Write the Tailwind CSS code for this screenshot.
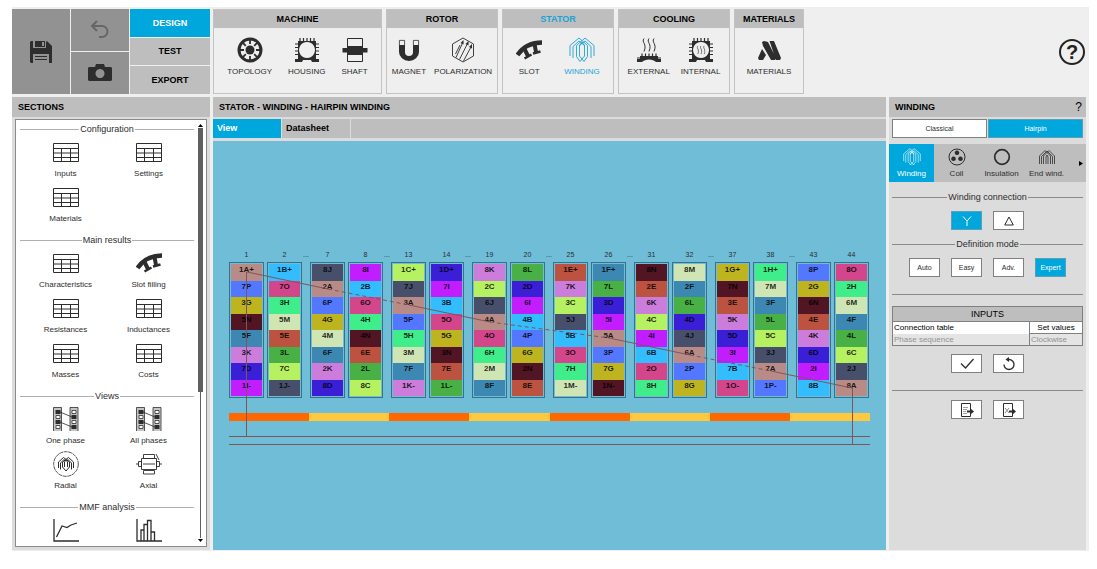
<!DOCTYPE html>
<html lang="en">
<head>
  <meta charset="UTF-8" />
  <meta name="viewport" content="width=device-width, initial-scale=1.0"/>
  <title>Stator | Hairpin winding</title>
  <script src="https://cdn.jsdelivr.net/npm/@tailwindcss/browser@4"></script>
</head>
<body class="bg-white font-['Liberation_Sans',Arial,sans-serif] text-[8px] leading-3 text-[#2d2d2d]">

  <!-- Icon set -->
  <svg class="hidden">
    <symbol id="save" viewBox="0 0 22 22">
      <path fill="currentColor" d="M1 0h2v7h13V0h1l5 5v17h-3v-9H3v9H1l-1-1V1zM5 0h10v6H5zM5 15h12v1H5zM5 18h12v1H5z"/>
      <path fill="#929292" d="M12 1h2v4h-2zM17 0h-1v1z"/>
    </symbol>
    <symbol id="undo" viewBox="0 0 20 20">
      <path fill="none" stroke="currentColor" stroke-width="2" d="M7 1L2 6l5 5M2 6h10a5.500 5.500 0 0 1 0 11H9"/>
    </symbol>
    <symbol id="camera" viewBox="0 0 24 18">
      <path fill="currentColor" fill-rule="evenodd" d="M1 3h6l1-3h8l1 3h6l1 1v12l-1 1H1l-1-1V4zM12 5a4.500 4.500 0 1 0 .01 0z"/>
    </symbol>
    <symbol id="topology" viewBox="0 0 26 26">
      <circle cx="13" cy="13" r="11" fill="none" stroke="currentColor" stroke-width="3"/>
      <circle cx="13" cy="13" r="4.500" fill="currentColor"/>
      <path stroke="currentColor" stroke-width="1.800" d="M13 2v5M13 19v5M2 13h5M19 13h5M5.200 5.200l3.600 3.600M17.200 17.200l3.600 3.600M5.200 20.800l3.600-3.600M17.200 8.800l3.600-3.600"/>
    </symbol>
    <symbol id="frame" viewBox="0 0 26 26">
      <path fill="currentColor" fill-rule="evenodd" d="M4 4h18v18h3v3h-7l-1-2H9l-1 2H1v-3h3zM13 5a8 8 0 1 0 .01 0z"/>
      <path stroke="currentColor" stroke-width="1.200" d="M6 1v4M9.500 1v4M13 1v4M16.500 1v4M20 1v4M1 7h4M1 10.500h4M1 14h4M1 17.500h4M21 7h4M21 10.500h4M21 14h4M21 17.500h4"/>
    </symbol>
    <symbol id="shaft" viewBox="0 0 26 26">
      <path fill="none" stroke="currentColor" d="M5.500 1.500h15v23h-15z"/>
      <path fill="currentColor" d="M5 9h16v2h4.500v4.500H21V18H5v-2.500H.5V11H5z"/>
    </symbol>
    <symbol id="magnet" viewBox="0 0 26 26">
      <path fill="currentColor" d="M3 8h6v7a4 4 0 0 0 8 0V8h6v7a10 9 0 0 1-20 0z"/>
      <path fill="none" stroke="currentColor" stroke-width=".8" d="M3.400 8V3.400h5.200V8M17.400 8V3.400h5.200V8"/>
    </symbol>
    <symbol id="polarization" viewBox="0 0 26 26">
      <path fill="none" stroke="currentColor" stroke-width=".9" d="M13 1l10.500 6v12L13 25 2.500 19V7zM6 20.500L13 5M9.500 22.500L18 5.500M13.500 24L21.500 9M5.500 17L10 8"/>
      <path fill="currentColor" d="M13.500 3v4.500l-3-1.500zM18.500 4v4.500l-3-1.500zM22 7v4.500l-3-1.500z"/>
    </symbol>
    <symbol id="slot" viewBox="0 0 26 26">
      <path fill="none" stroke="currentColor" stroke-width="4.500" d="M1.500 18C7 10 14 5.500 26 5.500"/>
      <path fill="none" stroke="currentColor" stroke-width="4" d="M8.500 12l3.500 7M18.500 7l1.500 8"/>
      <path fill="none" stroke="currentColor" stroke-width="2.500" d="M8.500 21.500l7-4M17 16.500l7.500-2"/>
    </symbol>
    <symbol id="coils" viewBox="0 0 26 26">
      <path fill="none" stroke="currentColor" stroke-width=".9" d="M1 19V8.500L10 1l8.500 7.500v11L15 24.500 10.500 19V8.500L13 5l2.500 3.500V19L11 24.500l-3.500-5v-11L16 1l9 7.500V19M4 21V9.500L10 4l6 5M22 21V9.500L16 4l-6 5"/>
    </symbol>
    <symbol id="heat" viewBox="0 0 14 14">
      <path fill="none" stroke="currentColor" d="M2 .5c-3 4 3.500 5 0 13M7 .5c-3 4 3.500 5 0 13M12 .5c-3 4 3.500 5 0 13"/>
    </symbol>
    <symbol id="external" viewBox="0 0 26 26">
      <use href="#heat" x="6" y="1" width="14" height="14"/>
      <path fill="currentColor" d="M4 19h18v3h3v3h-5c-3-3.500-11-3.500-14 0H1v-3h3z"/>
      <path stroke="currentColor" stroke-width="1.200" d="M6 16.500v3M9.500 16.500v3M13 16.500v3M16.500 16.500v3M20 16.500v3M1 21h4M21 21h4"/>
    </symbol>
    <symbol id="internal" viewBox="0 0 26 26">
      <use href="#frame" width="26" height="26"/>
      <use href="#heat" x="8.500" y="8.500" width="9" height="9"/>
    </symbol>
    <symbol id="materials" viewBox="0 0 26 26">
      <path fill="currentColor" d="M6 5l2-1 4 1 8 16-1 2h-4L7 9zM13.500 4H18l7 17-1 2h-4zM6 12l4 6-3 5H3l-1-2z"/>
    </symbol>
    <symbol id="table" viewBox="0 0 26 19">
      <path fill="none" stroke="currentColor" d="M.5.5h25v18H.5zM.5 5.500h25M.5 10h25M.5 14.500h25M8.500 6v12M17.500 6v12"/>
    </symbol>
    <symbol id="phases" viewBox="0 0 26 24">
      <path fill="#c4c4c4" stroke="currentColor" stroke-width=".8" d="M.5 24V.5h8V24M17 24V.5h8V24"/>
      <path fill="currentColor" d="M2.500 3h5v4h-5zM2.500 13h5v4h-5zM18.500 8h5v4h-5zM18.500 18h5v4h-5z"/>
      <path fill="#fff" stroke="currentColor" stroke-width=".8" d="M3 8.500h4v3H3zM3 18.500h4v3H3zM19 3.500h4v3h-4zM19 13.500h4v3h-4z"/>
      <path stroke="currentColor" stroke-width=".8" d="M7 5l12 5M7 15l12 5"/>
    </symbol>
    <symbol id="radial" viewBox="0 0 26 26">
      <circle cx="13" cy="13" r="12.300" fill="none" stroke="currentColor" stroke-width=".8" stroke-dasharray="4 .6"/>
      <path fill="none" stroke="currentColor" d="M5.500 17v-6l5-4.500L16.500 11v5l-3.500 4-3.500-4v-5L15.500 6.500l5 4.500v6M7.500 18.500V12l4-4M18.500 18.500V12l-4-4M11.500 16v-5L13 9l1.500 2v5"/>
    </symbol>
    <symbol id="axial" viewBox="0 0 26 22">
      <path fill="none" stroke="currentColor" stroke-width=".9" d="M5.500 5.500h15v11h-15zM7.500 1.500h11v4h-11zM7.500 17.500h11v3.500h-11zM2.500 8.500h3v5h-3zM20.500 8.500h3v5h-3zM0 11h2M7 11h12M24 11h2M20 1l3 6"/>
    </symbol>
    <symbol id="curve" viewBox="0 0 26 24">
      <path fill="none" stroke="currentColor" stroke-width="1.300" d="M1 1v22h25M3.500 19L9 8l5 1.500L18 7l6-2"/>
    </symbol>
    <symbol id="bars" viewBox="0 0 26 24">
      <path fill="none" stroke="currentColor" stroke-width="1.300" d="M1 1v22h25M5 23V12h3v11M8 12V6.500h3.500V23M11.500 6.500v-4H15V23M15 14h3.500v9"/>
    </symbol>
    <symbol id="coil" viewBox="0 0 18 18">
      <circle cx="9" cy="9" r="8" fill="none" stroke="currentColor"/>
      <path fill="currentColor" d="M9 2.500a2.300 2.300 0 1 0 .01 0zM5.500 8.500a2.300 2.300 0 1 0 .01 0zM12.500 8.500a2.300 2.300 0 1 0 .01 0z"/>
    </symbol>
    <symbol id="ring" viewBox="0 0 18 18">
      <circle cx="9" cy="9" r="7.300" fill="none" stroke="currentColor" stroke-width="1.700"/>
    </symbol>
    <symbol id="endwind" viewBox="0 0 18 18">
      <path fill="none" stroke="currentColor" stroke-width=".8" d="M1.500 16V8L7 2.500 12.500 8v8M3.500 16V8.500L9 3l5.500 5.500V16M5.500 16V8L11 2.500 16.500 8v8M8 16V9l1-2 1 2v7"/>
    </symbol>
    <symbol id="sheet" viewBox="0 0 14 14">
      <path fill="none" stroke="currentColor" d="M1.500.5h9v13h-9z"/>
      <path fill="currentColor" d="M7 7.500h3V5l4 3.500-4 3.500V9.500H7z"/>
    </symbol>
  </svg>

  <div class="ml-3 mr-2 mt-[7px] bg-[#efefef] pt-0.5 pr-[3px] pb-px">

    <!-- Top bar -->
    <header class="flex h-[85px] gap-[3px]">
      <div class="grid w-[198px] shrink-0 grid-cols-[58px_58px_1fr] gap-x-px">
        <button aria-label="Save" class="flex items-center justify-center bg-[#929292]"><svg class="size-[22px]"><use href="#save"/></svg></button>
        <div class="grid grid-rows-2 gap-px">
          <button aria-label="Undo" class="flex items-center justify-center bg-[#929292] text-[#666]"><svg class="size-5"><use href="#undo"/></svg></button>
          <button aria-label="Screenshot" class="flex items-center justify-center bg-[#929292]"><svg class="h-[18px] w-6"><use href="#camera"/></svg></button>
        </div>
        <div class="grid grid-rows-3 gap-px text-[9px] font-bold">
          <button class="bg-[#00a7dd] text-white">DESIGN</button>
          <button class="bg-[#bebebe] text-black">TEST</button>
          <button class="bg-[#bebebe] text-black">EXPORT</button>
        </div>
      </div>

      <nav class="flex gap-1">
        <section class="w-[169px] border border-[#c3c3c3]">
          <h2 class="bg-[#bebebe] text-center text-[9px] leading-[18px] font-bold text-black">MACHINE</h2>
          <div class="flex justify-center gap-4 pt-[9px]">
            <button class="flex flex-col items-center gap-[3px]"><svg class="size-[26px]"><use href="#topology"/></svg>TOPOLOGY</button>
            <button class="flex flex-col items-center gap-[3px]"><svg class="size-[26px]"><use href="#frame"/></svg>HOUSING</button>
            <button class="flex flex-col items-center gap-[3px]"><svg class="size-[26px]"><use href="#shaft"/></svg>SHAFT</button>
          </div>
        </section>
        <section class="w-[112px] border border-[#c3c3c3]">
          <h2 class="bg-[#bebebe] text-center text-[9px] leading-[18px] font-bold text-black">ROTOR</h2>
          <div class="flex justify-center gap-2 pt-[9px]">
            <button class="flex flex-col items-center gap-[3px]"><svg class="size-[26px]"><use href="#magnet"/></svg>MAGNET</button>
            <button class="flex flex-col items-center gap-[3px]"><svg class="size-[26px]"><use href="#polarization"/></svg>POLARIZATION</button>
          </div>
        </section>
        <section class="w-[112px] border border-[#c3c3c3]">
          <h2 class="bg-[#bebebe] text-center text-[9px] leading-[18px] font-bold text-[#1ba3d6]">STATOR</h2>
          <div class="flex justify-center gap-[22px] pt-[9px]">
            <button class="flex flex-col items-center gap-[3px]"><svg class="size-[26px]"><use href="#slot"/></svg>SLOT</button>
            <button class="flex flex-col items-center gap-[3px] text-[#1ba3d6]"><svg class="size-[26px]"><use href="#coils"/></svg>WINDING</button>
          </div>
        </section>
        <section class="w-[112px] border border-[#c3c3c3]">
          <h2 class="bg-[#bebebe] text-center text-[9px] leading-[18px] font-bold text-black">COOLING</h2>
          <div class="flex justify-center gap-[11px] pt-[9px]">
            <button class="flex flex-col items-center gap-[3px]"><svg class="size-[26px]"><use href="#external"/></svg>EXTERNAL</button>
            <button class="flex flex-col items-center gap-[3px]"><svg class="size-[26px]"><use href="#internal"/></svg>INTERNAL</button>
          </div>
        </section>
        <section class="w-[70px] border border-[#c3c3c3]">
          <h2 class="bg-[#bebebe] text-center text-[9px] leading-[18px] font-bold text-black">MATERIALS</h2>
          <div class="flex justify-center pt-[9px]">
            <button class="flex flex-col items-center gap-[3px]"><svg class="size-[26px]"><use href="#materials"/></svg>MATERIALS</button>
          </div>
        </section>
      </nav>

      <button aria-label="Help" class="mr-px ml-auto size-[26px] self-center rounded-full border-2 border-[#222] text-[20px] leading-[22px] font-bold text-[#222]">?</button>
    </header>

    <div class="mt-[3px] grid grid-cols-[198px_1fr_197px] gap-[3px]">

      <!-- Sections -->
      <aside class="bg-[#dcdcdc] pb-[3px]">
        <h2 class="bg-[#bebebe] pl-1.5 text-[9px] leading-5 font-bold text-black">SECTIONS</h2>
        <div class="mx-[3px] mt-0.5 flex h-[428px] overflow-hidden border border-[#8a8a8a] bg-white pt-0.5 pl-1">
          <div class="flex-1 space-y-[7px]">
            <section>
              <h3 class="flex items-center gap-px text-[9px] leading-[14px] before:h-px before:flex-1 before:bg-[#b0b0b0] after:h-px after:flex-1 after:bg-[#b0b0b0]">Configuration</h3>
              <div class="grid auto-rows-[45px] grid-cols-2 px-1">
                <button class="flex flex-col items-center"><span class="flex h-8 items-center"><svg class="h-[19px] w-[26px]"><use href="#table"/></svg></span>Inputs</button>
                <button class="flex flex-col items-center"><span class="flex h-8 items-center"><svg class="h-[19px] w-[26px]"><use href="#table"/></svg></span>Settings</button>
                <button class="flex flex-col items-center"><span class="flex h-8 items-center"><svg class="h-[19px] w-[26px]"><use href="#table"/></svg></span>Materials</button>
              </div>
            </section>
            <section>
              <h3 class="flex items-center gap-px text-[9px] leading-[14px] before:h-px before:flex-1 before:bg-[#b0b0b0] after:h-px after:flex-1 after:bg-[#b0b0b0]">Main results</h3>
              <div class="grid auto-rows-[45px] grid-cols-2 px-1">
                <button class="flex flex-col items-center"><span class="flex h-8 items-center"><svg class="h-[19px] w-[26px]"><use href="#table"/></svg></span>Characteristics</button>
                <button class="flex flex-col items-center"><span class="flex h-8 items-center"><svg class="size-[26px]"><use href="#slot"/></svg></span>Slot filling</button>
                <button class="flex flex-col items-center"><span class="flex h-8 items-center"><svg class="h-[19px] w-[26px]"><use href="#table"/></svg></span>Resistances</button>
                <button class="flex flex-col items-center"><span class="flex h-8 items-center"><svg class="h-[19px] w-[26px]"><use href="#table"/></svg></span>Inductances</button>
                <button class="flex flex-col items-center"><span class="flex h-8 items-center"><svg class="h-[19px] w-[26px]"><use href="#table"/></svg></span>Masses</button>
                <button class="flex flex-col items-center"><span class="flex h-8 items-center"><svg class="h-[19px] w-[26px]"><use href="#table"/></svg></span>Costs</button>
              </div>
            </section>
            <section>
              <h3 class="flex items-center gap-px text-[9px] leading-[14px] before:h-px before:flex-1 before:bg-[#b0b0b0] after:h-px after:flex-1 after:bg-[#b0b0b0]">Views</h3>
              <div class="grid auto-rows-[45px] grid-cols-2 px-1">
                <button class="flex flex-col items-center"><span class="flex h-8 items-center"><svg class="h-6 w-[26px]"><use href="#phases"/></svg></span>One phase</button>
                <button class="flex flex-col items-center"><span class="flex h-8 items-center"><svg class="h-6 w-[26px]"><use href="#phases"/></svg></span>All phases</button>
                <button class="flex flex-col items-center"><span class="flex h-8 items-center"><svg class="size-[26px]"><use href="#radial"/></svg></span>Radial</button>
                <button class="flex flex-col items-center"><span class="flex h-8 items-center"><svg class="h-[22px] w-[26px]"><use href="#axial"/></svg></span>Axial</button>
              </div>
            </section>
            <section>
              <h3 class="flex items-center gap-px text-[9px] leading-[14px] before:h-px before:flex-1 before:bg-[#b0b0b0] after:h-px after:flex-1 after:bg-[#b0b0b0]">MMF analysis</h3>
              <div class="grid grid-cols-2 px-1">
                <button aria-label="Curve" class="flex h-8 items-center justify-center"><svg class="h-6 w-[26px]"><use href="#curve"/></svg></button>
                <button aria-label="Harmonics" class="flex h-8 items-center justify-center"><svg class="h-6 w-[26px]"><use href="#bars"/></svg></button>
              </div>
            </section>
          </div>
          <!-- Scrollbar -->
          <div class="mr-[3px] ml-1 flex w-[5px] flex-col items-center pt-px pb-[3px]">
            <svg class="h-[5px] w-[5px] shrink-0" viewBox="0 0 5 5"><path d="M0 4l2.500-3L5 4z"/></svg>
            <span class="h-[264px] w-[5px] bg-[#606060]"></span>
            <span class="w-px flex-1 bg-[#606060]"></span>
            <svg class="h-[5px] w-[5px] shrink-0" viewBox="0 0 5 5"><path d="M0 1l2.500 3L5 1z"/></svg>
          </div>
        </div>
      </aside>

      <!-- Winding view -->
      <main class="flex flex-col bg-[#dcdcdc]">
        <h1 class="bg-[#bebebe] pl-1.5 text-[9px] leading-5 font-bold text-black">STATOR - WINDING - HAIRPIN WINDING</h1>
        <div class="mt-0.5 mb-[3px] flex gap-px text-[9px] leading-[19px] font-bold">
          <button class="w-[68px] bg-[#00a7dd] pl-1 text-left text-white">View</button>
          <button class="w-[68px] bg-[#bebebe] pl-1 text-left text-black">Datasheet</button>
          <span class="flex-1 bg-[#bebebe]"></span>
        </div>
        <div class="flex-1 bg-[#6fbdd7] pt-[108px]">
          <div class="relative mx-auto h-[196px] w-[641px]">
            <div id="slots" class="flex"></div>
            <div class="mt-[15px] grid h-2 grid-cols-8">
              <span class="bg-[#ff6700]"></span><span class="bg-[#ffc83f]"></span>
              <span class="bg-[#ff6700]"></span><span class="bg-[#ffc83f]"></span>
              <span class="bg-[#ff6700]"></span><span class="bg-[#ffc83f]"></span>
              <span class="bg-[#ff6700]"></span><span class="bg-[#ffc83f]"></span>
            </div>
            <!-- Path of phase A -->
            <svg class="absolute inset-0" width="641" height="196" fill="none" stroke="#7d565c">
              <path d="M0 187.500h641M0 195.500h641M17.500 23v164M623.500 139v56"/>
              <path d="M18 23l81 17M180 56l81 17M380 89l81 17M542 122l81 17"/>
              <path stroke-dasharray="4 3" d="M99 40l81 16M261 73l119 16M461 106l81 16"/>
            </svg>
          </div>
        </div>
      </main>

      <!-- Winding settings -->
      <aside class="bg-[#dcdcdc]">
        <div class="flex justify-between bg-[#bebebe] pr-1 pl-1.5 leading-5 text-black">
          <h2 class="text-[9px] font-bold">WINDING</h2>
          <button aria-label="Winding help" class="text-[12px]">?</button>
        </div>
        <div class="mx-[3px] mt-0.5 grid grid-cols-2 gap-px text-[7px]">
          <button class="h-[19px] border border-[#808080] bg-white">Classical</button>
          <button class="h-[19px] border border-[#5c9fb8] bg-[#00a7dd] text-white">Hairpin</button>
        </div>

        <div class="mt-1.5 flex h-[38px] bg-[#bebebe]">
          <button class="flex w-[45px] flex-col items-center bg-[#00a7dd] pt-1 text-white"><svg class="size-[18px]"><use href="#coils"/></svg><span class="mt-0.5">Winding</span></button>
          <button class="flex w-[45px] flex-col items-center pt-1"><svg class="size-[18px]"><use href="#coil"/></svg><span class="mt-0.5">Coil</span></button>
          <button class="flex w-[45px] flex-col items-center pt-1"><svg class="size-[18px]"><use href="#ring"/></svg><span class="mt-0.5">Insulation</span></button>
          <button class="flex w-[45px] flex-col items-center pt-1"><svg class="size-[18px]"><use href="#endwind"/></svg><span class="mt-0.5">End wind.</span></button>
          <button aria-label="More tabs" class="mr-[3px] ml-auto"><svg class="size-[5px]" viewBox="0 0 5 5"><path d="M1 0l4 2.500L1 5z"/></svg></button>
        </div>

        <div class="mx-[3px]">
          <h3 class="mt-2 flex items-center gap-px text-[9px] leading-[14px] before:h-px before:flex-1 before:bg-[#8a8a8a] after:h-px after:flex-1 after:bg-[#8a8a8a]">Winding connection</h3>
          <div class="mt-[7px] flex justify-center gap-[11px]">
            <button aria-label="Star" class="flex h-[19px] w-[31px] items-center justify-center border border-[#5c9fb8] bg-[#00a7dd] text-white"><svg class="size-[10px]" viewBox="0 0 10 10"><path fill="none" stroke="currentColor" d="M1 .5l4 4.500 4-4.500M5 5v5"/></svg></button>
            <button aria-label="Delta" class="flex h-[19px] w-[31px] items-center justify-center border border-[#808080] bg-white"><svg class="size-[10px]" viewBox="0 0 10 10"><path fill="none" stroke="currentColor" d="M5 1l4.300 8H.7z"/></svg></button>
          </div>

          <h3 class="mt-[7px] flex items-center gap-px text-[9px] leading-[14px] before:h-px before:flex-1 before:bg-[#8a8a8a] after:h-px after:flex-1 after:bg-[#8a8a8a]">Definition mode</h3>
          <div class="mt-[7px] flex justify-center gap-[11px] text-[7px]">
            <button class="h-[19px] w-[31px] border border-[#808080] bg-white">Auto</button>
            <button class="h-[19px] w-[31px] border border-[#808080] bg-white">Easy</button>
            <button class="h-[19px] w-[31px] border border-[#808080] bg-white">Adv.</button>
            <button class="h-[19px] w-[31px] border border-[#5c9fb8] bg-[#00a7dd] text-white">Expert</button>
          </div>

          <hr class="mt-[17px] border-[#8a8a8a]">
          <table class="mt-[11px] w-full border-collapse border border-[#808080]">
            <thead>
              <tr><th colspan="2" class="h-[15px] border border-[#808080] bg-[#bebebe] p-0 text-[9px] font-normal text-black">INPUTS</th></tr>
            </thead>
            <tbody>
              <tr class="h-3 bg-white leading-[11px] text-black">
                <td class="p-0 pl-px">Connection table</td>
                <td class="w-[53px] border border-[#808080] p-0"><button class="block w-full">Set values</button></td>
              </tr>
              <tr class="h-3 bg-[#e4e4e4] leading-[11px] text-[#929292]">
                <td class="p-0 pl-px">Phase sequence</td>
                <td class="border border-[#808080] p-0 pl-px">Clockwise</td>
              </tr>
            </tbody>
          </table>

          <div class="mt-2 flex justify-center gap-[11px]">
            <button aria-label="Apply" class="flex h-[19px] w-[31px] items-center justify-center border border-[#808080] bg-white"><svg class="h-3 w-[14px]" viewBox="0 0 14 12"><path fill="none" stroke="currentColor" stroke-width="1.300" d="M1 5.500L5.500 10 13.500 1"/></svg></button>
            <button aria-label="Reset" class="flex h-[19px] w-[31px] items-center justify-center border border-[#808080] bg-white"><svg class="size-[14px]" viewBox="0 0 14 14"><path fill="none" stroke="currentColor" stroke-width="1.300" d="M2 7.500a5 5 0 1 0 5-5H5"/><path fill="currentColor" d="M3.500 2.500L7 0v5z"/></svg></button>
          </div>
          <hr class="mt-[17px] border-[#8a8a8a]">
          <div class="mt-[9px] flex justify-center gap-[11px]">
            <button aria-label="Export text" class="flex h-[19px] w-[31px] items-center justify-center border border-[#808080] bg-white"><svg class="size-[14px]" viewBox="0 0 14 14"><use href="#sheet"/><path stroke="#888" stroke-width=".8" d="M3 4.500h5M3 6.500h4M3 8.500h3M3 10.500h4"/></svg></button>
            <button aria-label="Export spreadsheet" class="flex h-[19px] w-[31px] items-center justify-center border border-[#808080] bg-white"><svg class="size-[14px]" viewBox="0 0 14 14"><use href="#sheet"/><path stroke="#888" d="M3 5l4 5M7 5l-4 5"/></svg></button>
          </div>
        </div>
      </aside>
    </div>
  </div>

  <script>
    // one colour per phase letter
    const phaseColors = {
      A: 'bg-[#b98b86]', B: 'bg-[#33bdff]', C: 'bg-[#b6f161]', D: 'bg-[#3a1fd6]',
      E: 'bg-[#bc5340]', F: 'bg-[#3d87b3]', G: 'bg-[#bdb41f]', H: 'bg-[#3fee8b]',
      I: 'bg-[#c11dff]', J: 'bg-[#474f6b]', K: 'bg-[#cc7ddb]', L: 'bg-[#49b046]',
      M: 'bg-[#cfe6b4]', N: 'bg-[#511524]', O: 'bg-[#d3468b]', P: 'bg-[#5377ff]'
    };
    const slots = [
      [1, '1A+ 7P 3G 5N 5F 3K 7D 1I-'], [2, '1B+ 7O 3H 5M 5E 3L 7C 1J-'],
      [7, '8J 2A 6P 4G 4M 6F 2K 8D'], [8, '8I 2B 6O 4H 4N 6E 2L 8C'],
      [13, '1C+ 7J 3A 5P 5H 3M 7F 1K-'], [14, '1D+ 7I 3B 5O 5G 3N 7E 1L-'],
      [19, '8K 2C 6J 4A 4O 6H 2M 8F'], [20, '8L 2D 6I 4B 4P 6G 2N 8E'],
      [25, '1E+ 7K 3C 5J 5B 3O 7H 1M-'], [26, '1F+ 7L 3D 5I 5A 3P 7G 1N-'],
      [31, '8N 2E 6K 4C 4I 6B 2O 8H'], [32, '8M 2F 6L 4D 4J 6A 2P 8G'],
      [37, '1G+ 7N 3E 5K 5D 3I 7B 1O-'], [38, '1H+ 7M 3F 5L 5C 3J 7A 1P-'],
      [43, '8P 2G 6N 4E 4K 6D 2I 8B'], [44, '8O 2H 6M 4F 4L 6C 2J 8A']
    ];

    document.getElementById('slots').innerHTML = slots.map(([number, wires], i) => {
      const cells = wires.split(' ').map(wire =>
        `<span class="${phaseColors[wire[1]]}">${wire}</span>`).join('');
      const gap = i === slots.length - 1 ? ''
        : i % 2 ? '<span class="w-2 text-center text-[7px]">...</span>'
        : '<span class="w-[3px]"></span>';
      return `<div class="w-[35px] text-center">
        <div class="h-[13px] text-[7px]">${number}</div>
        <div class="grid h-[136px] grid-rows-8 border border-[#39708a] p-px font-bold text-black/85">${cells}</div>
      </div>${gap}`;
    }).join('');
  </script>
</body>
</html>
